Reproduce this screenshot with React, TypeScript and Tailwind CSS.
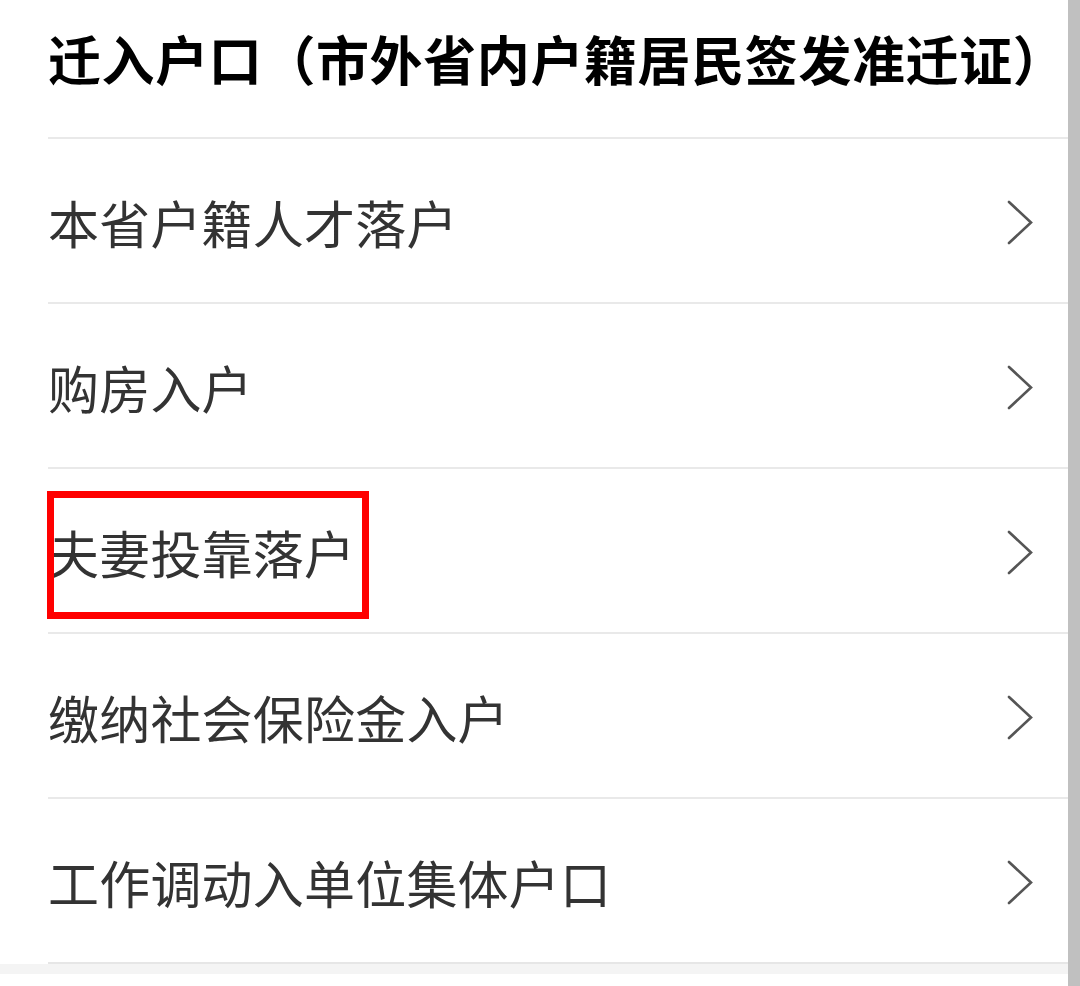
const items = ['本省户籍人才落户', '购房入户', '夫妻投靠落户', '缴纳社会保险金入户', '工作调动入单位集体户口'];

function Chevron() {
  return (
    <svg width="26" height="45" viewBox="0 0 26 45" fill="none" className="shrink-0">
      <polyline points="2,2 24,22.5 2,43" stroke="#555" strokeWidth="2.6" strokeLinecap="round" strokeLinejoin="miter" />
    </svg>
  );
}

export default function App() {
  return (
    <div
      className="w-[1080px] h-[986px] bg-white flex overflow-hidden"
      style={{ fontFamily: '"Noto Sans CJK SC", "Noto Sans", sans-serif' }}
    >
      <div className="flex-1 min-w-0 flex flex-col">
        <div className="h-[137px] pl-[48px] pt-[32px]">
          <h1 className="text-[53px] leading-[52px] font-bold text-black tracking-[0.6px] whitespace-nowrap">
            迁入户口（市外省内户籍居民签发准迁证）
          </h1>
        </div>
        {items.map((label, i) => (
          <div key={label}>
            <div className="ml-[48px] h-[2px] bg-[#e9e9e9]" />
            <div className="relative h-[163px] pl-[48px] pr-[35px] pt-[3px] flex items-center justify-between">
              <span className="text-[51px] leading-[50px] text-[#333333] tracking-[0.2px] whitespace-nowrap">{label}</span>
              <Chevron />
              {i === 2 && (
                <div className="absolute left-[47px] top-[22px] w-[322px] h-[128px] border-[7px] border-[#ff0000]" />
              )}
            </div>
          </div>
        ))}
        <div className="ml-[48px] h-[2px] bg-[#e6e6e6]" />
        <div className="h-[10px] bg-[#f4f4f4]" />
        <div className="flex-1 bg-white" />
      </div>
      <div className="w-[12px] shrink-0 bg-[#c0c0c0]" />
    </div>
  );
}
